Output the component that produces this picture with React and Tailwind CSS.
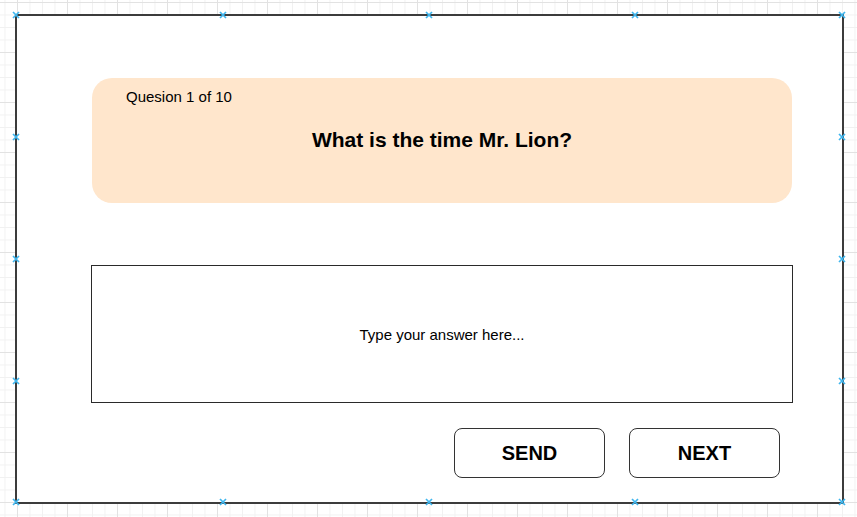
import React from 'react';

const HANDLES = [
    'left-[16px] top-[15px]',
    'left-[223px] top-[15px]',
    'left-[429px] top-[15px]',
    'left-[635px] top-[15px]',
    'left-[842px] top-[15px]',
    'left-[16px] top-[502px]',
    'left-[223px] top-[502px]',
    'left-[429px] top-[502px]',
    'left-[635px] top-[502px]',
    'left-[842px] top-[502px]',
    'left-[16px] top-[137px]',
    'left-[16px] top-[259px]',
    'left-[16px] top-[381px]',
    'left-[842px] top-[137px]',
    'left-[842px] top-[259px]',
    'left-[842px] top-[381px]',
];

const Handle = ({ pos }) => (
    <svg
        className={`absolute ${pos} -translate-x-1/2 -translate-y-1/2`}
        width="9"
        height="9"
        viewBox="0 0 9 9"
    >
        <path d="M1.5 1.5 L7.5 7.5 M7.5 1.5 L1.5 7.5" stroke="#3fb6ee" strokeWidth="1.7" />
    </svg>
);

const App = () => {
    return (
        <div className="relative h-[517px] w-full overflow-hidden bg-white font-['Liberation_Sans',Arial,sans-serif] text-black bg-[linear-gradient(to_right,#e2e2e2_1px,transparent_1px),linear-gradient(to_bottom,#e2e2e2_1px,transparent_1px),linear-gradient(to_right,#f1f1f1_1px,transparent_1px),linear-gradient(to_bottom,#f1f1f1_1px,transparent_1px)] bg-[size:50px_50px,50px_50px,12.5px_12.5px,12.5px_12.5px] bg-[position:17px_2px,17px_2px,4.5px_2px,4.5px_2px]">

            {/* Frame */}
            <div className="ml-[15px] mt-[14px] h-[490px] w-[829px] border-2 border-[#3c3c3c] bg-white">
                <div className="flex flex-col pl-[75px] pt-[62px]">

                    {/* Question card */}
                    <div className="flex h-[125px] w-[700px] flex-col rounded-[20px] bg-[#ffe6cc]">
                        <div className="pl-[34px] pt-[10px] text-[15px] leading-[17px]">Quesion 1 of 10</div>
                        <div className="mt-[23px] text-center text-[21px] font-bold leading-[24px]">What is the time Mr. Lion?</div>
                    </div>

                    {/* Answer box */}
                    <div className="-ml-px mt-[62px] flex h-[138px] w-[702px] items-center justify-center border-[1.5px] border-[#2a2a2a]">
                        <span className="text-[15px] leading-[17px]">Type your answer here...</span>
                    </div>

                    {/* Buttons */}
                    <div className="mt-[25px] flex w-[700px] justify-end gap-[24px] pr-[12px]">
                        <button className="h-[50px] w-[151px] rounded-[8px] border border-[#333] bg-white text-[20px] font-bold">SEND</button>
                        <button className="h-[50px] w-[151px] rounded-[8px] border border-[#333] bg-white text-[20px] font-bold">NEXT</button>
                    </div>
                </div>
            </div>

            {HANDLES.map(pos => <Handle key={pos} pos={pos} />)}
        </div>
    );
};

export default App;
